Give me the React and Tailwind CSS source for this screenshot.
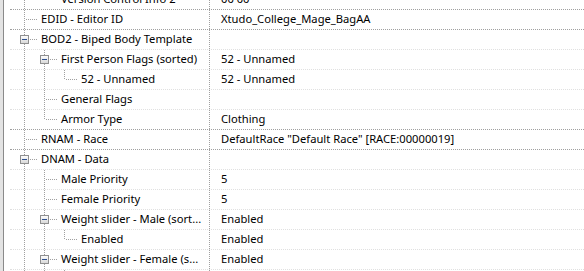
import React from 'react';

// tree rows: level, guides (ancestor lines that continue), last (no next sibling), open (expander box)
const rows = [
  { label: 'Version Control Info 2', value: '00 00', level: 2, guides: [true], last: true, dark: true },
  { label: 'EDID - Editor ID', value: 'Xtudo_College_Mage_BagAA', level: 1, guides: [], dark: true },
  { label: 'BOD2 - Biped Body Template', value: '', level: 1, guides: [], open: true },
  { label: 'First Person Flags (sorted)', value: '52 - Unnamed', level: 2, guides: [true], open: true },
  { label: '52 - Unnamed', value: '52 - Unnamed', level: 3, guides: [true, true], last: true },
  { label: 'General Flags', value: '', level: 2, guides: [true] },
  { label: 'Armor Type', value: 'Clothing', level: 2, guides: [true], last: true, dark: true },
  { label: 'RNAM - Race', value: 'DefaultRace "Default Race" [RACE:00000019]', level: 1, guides: [], dark: true },
  { label: 'DNAM - Data', value: '', level: 1, guides: [], open: true },
  { label: 'Male Priority', value: '5', level: 2, guides: [true] },
  { label: 'Female Priority', value: '5', level: 2, guides: [true] },
  { label: 'Weight slider - Male (sort...', value: 'Enabled', level: 2, guides: [true], open: true },
  { label: 'Enabled', value: 'Enabled', level: 3, guides: [true, true], last: true },
  { label: 'Weight slider - Female (s...', value: 'Enabled', level: 2, guides: [true], open: true },
  { label: 'Enabled', value: 'Enabled', level: 3, guides: [true, true], last: true },
];

const LINE = '#a0a0a0';

const TreeLines = ({ level, guides, last, open }) => {
  const x0 = 4 + 20 * (level - 1);
  const w = x0 + 24;
  return (
    <svg width={w} height={19} className="shrink-0" shapeRendering="crispEdges">
      <defs>
        <linearGradient id="exp" x1="0" y1="0" x2="0" y2="1">
          <stop offset="0" stopColor="#ffffff" />
          <stop offset="1" stopColor="#d6d6d6" />
        </linearGradient>
      </defs>
      {guides.map((g, i) =>
        g ? (
          <line key={i} x1={4 + 20 * i + 10.5} y1={0} x2={4 + 20 * i + 10.5} y2={19} stroke={LINE} strokeDasharray="1 1" />
        ) : null
      )}
      <line x1={x0 + 10.5} y1={0} x2={x0 + 10.5} y2={last ? 9 : 19} stroke={LINE} strokeDasharray="1 1" />
      <line x1={open ? x0 + 16 : x0 + 12} y1={9.5} x2={w} y2={9.5} stroke={LINE} strokeDasharray="1 1" />
      {open && (
        <g>
          <rect x={x0 + 6.5} y={5.5} width={8} height={8} fill="url(#exp)" stroke="#8f8f8f" />
          <line x1={x0 + 8} y1={9.5} x2={x0 + 13} y2={9.5} stroke="#2d4f8e" />
        </g>
      )}
    </svg>
  );
};

const Row = ({ row }) => (
  <div className="flex h-5 shrink-0">
    <div className="w-[6px] shrink-0" />
    <div
      className={`flex flex-1 min-w-0 border-b border-dotted ${row.dark ? 'border-[#a0a0a0]' : 'border-[#e0e0e0]'}`}
    >
      <div className="flex w-[200px] shrink-0 items-center overflow-hidden border-r border-dotted border-[#a0a0a0]">
        <TreeLines {...row} />
        <span className="ml-[3px] whitespace-nowrap">{row.label}</span>
      </div>
      <div className="flex items-center pl-[11px] whitespace-nowrap">{row.value}</div>
    </div>
  </div>
);

const App = () => (
  <div
    className="flex h-[271px] w-[584px] overflow-hidden bg-white text-[11.2px] text-black"
    style={{ fontFamily: '"Noto Sans", sans-serif' }}
  >
    <div className="w-[3px] shrink-0 bg-[#e3e3e3]" />
    <div className="w-px shrink-0 bg-[#8a8a8a]" />
    <div className="-mt-[10px] flex flex-1 flex-col">
      {rows.map((r, i) => (
        <Row key={i} row={r} />
      ))}
    </div>
  </div>
);

export default App;
